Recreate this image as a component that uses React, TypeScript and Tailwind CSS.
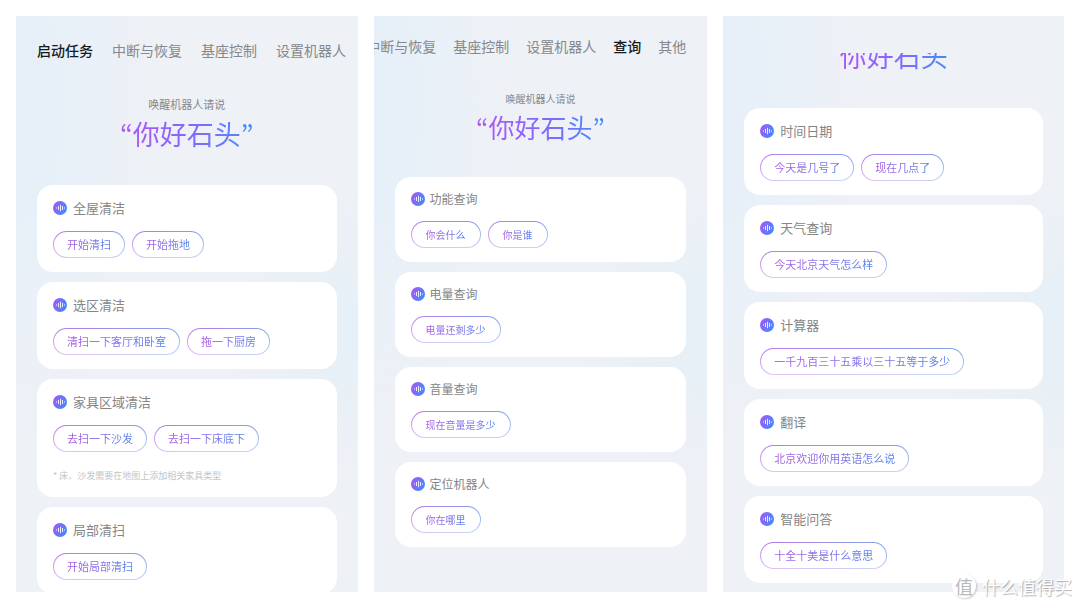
import React from "react";
import clsx from "clsx";

type Group = {
  title: string;
  phrases: string[];
  note?: string;
};

const taskGroups: Group[] = [
  { title: "全屋清洁", phrases: ["开始清扫", "开始拖地"] },
  { title: "选区清洁", phrases: ["清扫一下客厅和卧室", "拖一下厨房"] },
  {
    title: "家具区域清洁",
    phrases: ["去扫一下沙发", "去扫一下床底下"],
    note: "* 床、沙发需要在地图上添加相关家具类型",
  },
  { title: "局部清扫", phrases: ["开始局部清扫"] },
];

const queryGroups: Group[] = [
  { title: "功能查询", phrases: ["你会什么", "你是谁"] },
  { title: "电量查询", phrases: ["电量还剩多少"] },
  { title: "音量查询", phrases: ["现在音量是多少"] },
  { title: "定位机器人", phrases: ["你在哪里"] },
];

const otherGroups: Group[] = [
  { title: "时间日期", phrases: ["今天是几号了", "现在几点了"] },
  { title: "天气查询", phrases: ["今天北京天气怎么样"] },
  { title: "计算器", phrases: ["一千九百三十五乘以三十五等于多少"] },
  { title: "翻译", phrases: ["北京欢迎你用英语怎么说"] },
  { title: "智能问答", phrases: ["十全十美是什么意思"] },
];

const VoiceIcon = () => (
  <svg viewBox="0 0 14 14" className="size-[14px] shrink-0" aria-hidden="true">
    <defs>
      <linearGradient id="voice" x1="0" y1="0.3" x2="1" y2="0.7">
        <stop offset="0" stopColor="#a259f7" />
        <stop offset="1" stopColor="#3f8bff" />
      </linearGradient>
    </defs>
    <circle cx="7" cy="7" r="7" fill="url(#voice)" />
    <g stroke="#fff" strokeWidth="1" strokeLinecap="round" opacity="0.85">
      <path d="M3.5 6.8v0.4" />
      <path d="M5.5 5.4v3.2" />
      <path d="M7.5 4.2v5.6" />
      <path d="M9.5 5.4v3.2" />
      <path d="M11.5 6.8v0.4" />
    </g>
  </svg>
);

const Phrase = ({ text, compact }: { text: string; compact?: boolean }) => (
  <button
    type="button"
    className="rounded-full bg-[linear-gradient(to_bottom,rgba(255,255,255,0.1),rgba(255,255,255,0.6)),linear-gradient(to_right,#b269e6,#7098e8)] p-px"
  >
    <span
      className={clsx(
        "block rounded-full bg-white leading-[25px]",
        compact ? "px-[14px] text-[10px]" : "px-[13px] text-[11px]"
      )}
    >
      <span className="block bg-linear-to-r from-[#a959e6] to-[#4a80ec] bg-clip-text whitespace-nowrap text-transparent">
        {text}
      </span>
    </span>
  </button>
);

const Card = ({ group, compact }: { group: Group; compact?: boolean }) => (
  <section
    className={clsx(
      "rounded-2xl bg-white px-4 pb-[14px]",
      compact ? "pt-3" : "pt-[13px]"
    )}
  >
    <div
      className={clsx("flex items-center", compact ? "gap-[5px]" : "gap-[6px]")}
    >
      <VoiceIcon />
      <h3
        className={clsx(
          "leading-5 text-[#858585]",
          compact ? "text-[12px]" : "text-[13px]"
        )}
      >
        {group.title}
      </h3>
    </div>
    <div className={clsx("flex gap-[7px]", compact ? "mt-3" : "mt-[13px]")}>
      {group.phrases.map((phrase) => (
        <Phrase key={phrase} text={phrase} compact={compact} />
      ))}
    </div>
    {group.note && (
      <p className="mt-4 text-[9px] leading-[15px] text-[#c4c4c4]">
        {group.note}
      </p>
    )}
  </section>
);

const CardList = ({
  groups,
  compact,
}: {
  groups: Group[];
  compact?: boolean;
}) => (
  <div className="flex flex-col gap-[10px]">
    {groups.map((group) => (
      <Card key={group.title} group={group} compact={compact} />
    ))}
  </div>
);

const Tabs = ({
  items,
  active,
  className,
}: {
  items: string[];
  active: string;
  className: string;
}) => (
  <nav className={clsx("flex text-[14px] leading-5", className)}>
    {items.map((item) => (
      <button
        key={item}
        type="button"
        className={clsx(
          "shrink-0 whitespace-nowrap",
          item === active ? "font-medium text-[#17191c]" : "text-[#85888c]"
        )}
      >
        {item}
      </button>
    ))}
  </nav>
);

// the Korean cut has proportional curly quotes
const Quote = ({ children }: { children: string }) => (
  <span className="font-['Noto_Sans_CJK_KR',sans-serif]">{children}</span>
);

const WakeWord = ({
  compact,
  quoted = true,
}: {
  compact?: boolean;
  quoted?: boolean;
}) => (
  <h2
    className={clsx(
      "mx-auto flex w-fit bg-linear-to-r from-[#b455f2] via-[#8266ff] to-[#3f8bf8] bg-clip-text leading-9 text-transparent",
      compact ? "text-[26px]" : "text-[27px]"
    )}
  >
    {quoted && <Quote>“</Quote>}
    <span>你好石头</span>
    {quoted && <Quote>”</Quote>}
  </h2>
);

const Panel = ({
  className,
  children,
}: {
  className: string;
  children: React.ReactNode;
}) => (
  <div
    className={clsx(
      "min-w-0 overflow-hidden bg-[#eef1f6] bg-[radial-gradient(ellipse_40%_60%_at_0%_15%,#e7f0f8_30%,transparent),radial-gradient(ellipse_40%_25%_at_100%_55%,#e6f0f6_20%,transparent)] px-[21px]",
      className
    )}
  >
    {children}
  </div>
);

const Watermark = () => (
  <div className="absolute right-2 bottom-[10px] flex items-center gap-[6px] leading-6">
    <span className="flex size-6 items-center justify-center rounded-full bg-white text-[18px] text-[#b9b9bd] shadow-[1px_1px_2px_rgba(0,0,0,0.2)]">
      值
    </span>
    <span className="text-[18px] text-white [text-shadow:1px_1px_1px_rgba(0,0,0,0.3)]">
      什么值得买
    </span>
  </div>
);

export default function App() {
  return (
    <main className="relative flex h-screen gap-4 overflow-hidden bg-white p-4 font-['Noto_Sans_CJK_SC',sans-serif]">
      <Panel className="flex-[342] pt-6">
        <Tabs
          items={["启动任务", "中断与恢复", "基座控制", "设置机器人"]}
          active="启动任务"
          className="gap-[19px]"
        />
        <p className="mt-9 text-center text-[11px] leading-4 text-[#85888c]">
          唤醒机器人请说
        </p>
        <div className="mt-1 mb-[33px]">
          <WakeWord />
        </div>
        <CardList groups={taskGroups} />
      </Panel>

      <Panel className="flex-[333] pt-5">
        <Tabs
          items={["中断与恢复", "基座控制", "设置机器人", "查询", "其他"]}
          active="查询"
          className="justify-end gap-[17px]"
        />
        <p className="mt-[35px] text-center text-[10px] leading-4 text-[#85888c]">
          唤醒机器人请说
        </p>
        <div className="mt-[2px] mb-8">
          <WakeWord compact />
        </div>
        <CardList groups={queryGroups} compact />
      </Panel>

      <Panel className="flex-[341] pt-[37px]">
        {/* list is scrolled, the wake word slides under the top bar */}
        <div className="overflow-hidden">
          <div className="-mt-[15px] mb-[34px]">
            <WakeWord quoted={false} />
          </div>
          <CardList groups={otherGroups} />
        </div>
      </Panel>

      <Watermark />
    </main>
  );
}
